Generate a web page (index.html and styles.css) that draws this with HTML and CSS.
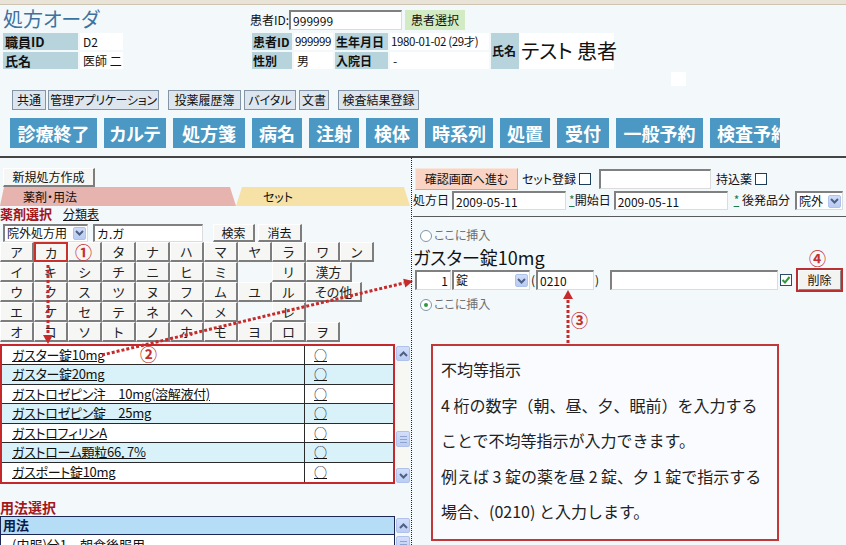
FILE: index.html
```html
<!DOCTYPE html>
<html lang="ja">
<head>
<meta charset="utf-8">
<title>処方オーダ</title>
<link rel="stylesheet" href="styles.css">
</head>
<body>
<div class="topbar"></div>
<div class="head">
  <div class="staff">
    <div class="title">処方オーダ</div>
    <div class="kv"><span class="lbl sl">職員ID</span><span class="val sv">D2</span></div>
    <div class="kv"><span class="lbl sl">氏名</span><span class="val sv">医師 二</span></div>
  </div>
  <div class="patient">
    <div class="pid"><span>患者ID:</span><input class="inp pid-in" value="999999"><span class="btn-green">患者選択</span></div>
    <div class="pinfo">
      <div class="pgrid">
        <span class="lbl">患者ID</span><span class="val num-v">999999</span><span class="lbl">生年月日</span><span class="val num-v">1980-01-02 (29才)</span>
        <span class="lbl">性別</span><span class="val">男</span><span class="lbl">入院日</span><span class="val">-</span>
      </div>
      <span class="lbl tall">氏名</span><span class="val big">テスト 患者</span>
    </div>
  </div>
  <div class="sq"></div>
</div>
<nav class="menu1">
  <span class="m1">共通</span><span class="m1">管理アプリケーション</span><span class="m1">投薬履歴簿</span><span class="m1">バイタル</span><span class="m1">文書</span><span class="m1">検査結果登録</span>
</nav>
<nav class="menu2">
  <span class="m2">診療終了</span><span class="m2">カルテ</span><span class="m2">処方箋</span><span class="m2">病名</span><span class="m2">注射</span><span class="m2">検体</span><span class="m2">時系列</span><span class="m2">処置</span><span class="m2">受付</span><span class="m2">一般予約</span><span class="m2">検査予約</span>
</nav>
<div class="rule"></div>
<div class="main">
  <section class="left">
    <div class="newbtn rb">新規処方作成</div>
    <div class="tabs"><div class="tab tab1">薬剤・用法</div><div class="tab tab2">セット</div></div>
    <div class="selhead"><span class="sect">薬剤選択</span><span class="link">分類表</span></div>
    <div class="search">
      <div class="sel sel-a"><span>院外処方用</span><span class="dd"><svg width="9" height="6" viewBox="0 0 9 6"><path d="M1 1 L4.5 4.5 L8 1" stroke="#4d6185" stroke-width="2" fill="none"/></svg></span></div>
      <input class="inp q" value="カ.ガ">
      <div class="rb sbtn b1">検索</div>
      <div class="rb sbtn b2">消去</div>
    </div>
    <div class="kana">
      <div class="krow"><span class="k rb">ア</span><span class="k rb ksel">カ</span><span class="k rb"></span><span class="k rb">タ</span><span class="k rb">ナ</span><span class="k rb">ハ</span><span class="k rb">マ</span><span class="k rb">ヤ</span><span class="k rb">ラ</span><span class="k rb">ワ</span><span class="k rb">ン</span></div>
      <div class="krow"><span class="k rb">イ</span><span class="k rb">キ</span><span class="k rb">シ</span><span class="k rb">チ</span><span class="k rb">ニ</span><span class="k rb">ヒ</span><span class="k rb">ミ</span><span class="k ke"></span><span class="k rb">リ</span><span class="k rb kw1">漢方</span></div>
      <div class="krow"><span class="k rb">ウ</span><span class="k rb">ク</span><span class="k rb">ス</span><span class="k rb">ツ</span><span class="k rb">ヌ</span><span class="k rb">フ</span><span class="k rb">ム</span><span class="k rb">ユ</span><span class="k rb">ル</span><span class="k rb kw2">その他</span></div>
      <div class="krow"><span class="k rb">エ</span><span class="k rb">ケ</span><span class="k rb">セ</span><span class="k rb">テ</span><span class="k rb">ネ</span><span class="k rb">ヘ</span><span class="k rb">メ</span><span class="k ke"></span><span class="k rb">レ</span></div>
      <div class="krow"><span class="k rb">オ</span><span class="k rb">コ</span><span class="k rb">ソ</span><span class="k rb">ト</span><span class="k rb">ノ</span><span class="k rb">ホ</span><span class="k rb">モ</span><span class="k rb">ヨ</span><span class="k rb">ロ</span><span class="k rb">ヲ</span></div>
    </div>
    <div class="druglist">
      <div class="dtable">
        <div class="drow"><span class="dname">ガスター錠10mg</span><span class="dmark">○</span></div>
        <div class="drow alt"><span class="dname">ガスター錠20mg</span><span class="dmark">○</span></div>
        <div class="drow"><span class="dname">ガストロゼピン注　10mg(溶解液付)</span><span class="dmark">○</span></div>
        <div class="drow alt"><span class="dname">ガストロゼピン錠　25mg</span><span class="dmark">○</span></div>
        <div class="drow"><span class="dname">ガストロフィリンA</span><span class="dmark">○</span></div>
        <div class="drow alt"><span class="dname">ガストローム顆粒66．7%</span><span class="dmark">○</span></div>
        <div class="drow"><span class="dname">ガスポート錠10mg</span><span class="dmark">○</span></div>
      </div>
      <div class="sbar">
        <span class="sbtn-s"><svg width="9" height="6" viewBox="0 0 9 6"><path d="M1 5 L4.5 1.5 L8 5" stroke="#4d6185" stroke-width="2" fill="none"/></svg></span>
        <span class="thumb"></span>
        <span class="sbtn-s down"><svg width="9" height="6" viewBox="0 0 9 6"><path d="M1 1 L4.5 4.5 L8 1" stroke="#4d6185" stroke-width="2" fill="none"/></svg></span>
      </div>
    </div>
    <div class="sect sect2">用法選択</div>
    <div class="uselist">
      <div class="utable"><div class="uhead">用法</div><div class="urow">(内服)分1　朝食後服用</div></div>
      <div class="sbar sbar2">
        <span class="sbtn-s"><svg width="9" height="6" viewBox="0 0 9 6"><path d="M1 5 L4.5 1.5 L8 5" stroke="#4d6185" stroke-width="2" fill="none"/></svg></span>
        <span class="thumb thumb2"></span>
      </div>
    </div>
  </section>
  <section class="right">
    <div class="r1">
      <span class="pinkbtn">確認画面へ進む</span>
      <span class="t-set">セット登録</span><span class="chk"></span>
      <input class="inp setname" value="">
      <span class="t-mochi">持込薬</span><span class="chk"></span>
    </div>
    <div class="r2">
      <span>処方日</span>
      <input class="inp date" value="2009-05-11">
      <span class="t-start"><span class="ast">*</span>開始日</span>
      <input class="inp date" value="2009-05-11">
      <span class="t-gen"><span class="ast">*</span> 後発品分</span>
      <div class="sel sel-b"><span>院外</span><span class="dd"><svg width="9" height="6" viewBox="0 0 9 6"><path d="M1 1 L4.5 4.5 L8 1" stroke="#4d6185" stroke-width="2" fill="none"/></svg></span></div>
    </div>
    <div class="rrule"></div>
    <div class="ins"><span class="radio"></span>ここに挿入</div>
    <div class="drugname">ガスター錠10mg</div>
    <div class="r3">
      <input class="inp qty" value="1">
      <div class="sel sel-c"><span>錠</span><span class="dd"><svg width="9" height="6" viewBox="0 0 9 6"><path d="M1 1 L4.5 4.5 L8 1" stroke="#4d6185" stroke-width="2" fill="none"/></svg></span></div>
      <span class="paren">(</span><input class="inp code" value="0210"><span class="paren">)</span>
      <input class="inp memo" value="">
      <span class="chk on"><svg width="10" height="10" viewBox="0 0 10 10"><path d="M1.5 5 L4 7.5 L8.5 2" stroke="#2f9a3c" stroke-width="2" fill="none"/></svg></span>
      <span class="delbtn"><span class="delin">削除</span></span>
    </div>
    <div class="ins ins2"><span class="radio on"></span>ここに挿入</div>
    <div class="infobox">
      <p>不均等指示</p>
      <p>4 桁の数字（朝、昼、夕、眠前）を入力する</p>
      <p>ことで不均等指示が入力できます。</p>
      <p>例えば 3 錠の薬を昼 2 錠、夕 1 錠で指示する</p>
      <p>場合、(0210) と入力します。</p>
    </div>
  </section>
</div>
<svg class="overlay" width="846" height="545" viewBox="0 0 846 545">
  <g stroke="#c62a2a" stroke-width="3" stroke-dasharray="3 2" fill="none">
    <line x1="48" y1="265" x2="48" y2="336"/>
    <line x1="102" y1="355" x2="404" y2="283"/>
    <line x1="568" y1="343" x2="568" y2="298"/>
  </g>
  <g fill="#c62a2a">
    <polygon points="43,335 53,335 48,344"/>
    <polygon points="413,281 405.3,287.5 403.2,278.7"/>
    <polygon points="568,290 563,299 573,299"/>
  </g>
</svg>
<span class="num n1">①</span>
<span class="num n2">②</span>
<span class="num n3">③</span>
<span class="num n4">④</span>
</body>
</html>
```

FILE: styles.css
```css
* { box-sizing: border-box; margin: 0; padding: 0; }
html, body { margin: 0; padding: 0; }
body {
  width: 846px; height: 545px; overflow: hidden; position: relative;
  background: #f3f8fb;
  font-family: "Noto Sans CJK JP", "Noto Sans", sans-serif;
  font-size: 12px; line-height: 1.2; color: #111;
  font-feature-settings: "palt" 1;
}
input { font-family: inherit; }

.topbar { height: 5px; background: #e9e3d7; border-bottom: 1px solid #cdc3b1; }

/* header */
.head { display: flex; height: 85px; padding-left: 3px; }
.staff { width: 247px; flex: none; }
.title { height: 28px; line-height: 28px; font-size: 20px; color: #3d72a0; }
.kv { display: flex; gap: 2px; height: 17px; margin-bottom: 2px; }
.lbl { background: #b7d3dc; font-weight: 700; font-size: 13px; line-height: 17px; padding-left: 2px; color: #111; white-space: nowrap; overflow: hidden; }
.val { background: #fff; line-height: 17px; padding-left: 3px; font-size: 12px; white-space: nowrap; }
.sl { width: 75px; }
.sv { width: 43px; }
.patient { width: 365px; flex: none; }
.pid { display: flex; align-items: center; height: 20px; margin-top: 5px; }
.inp {
  display: block; height: 20px; background: #fff; color: #111;
  border-style: solid; border-width: 2px 1px 1px 2px;
  border-color: #808080 #dcdcdc #dcdcdc #808080;
  font-size: 12px; line-height: 17px; padding: 0 2px; outline: none;
}
.pid-in { width: 113px; }
.btn-green { margin-left: 3px; width: 60px; height: 20px; line-height: 20px; text-align: center; background: #d3ebc3; }
.pinfo { display: flex; margin-top: 3px; margin-left: 2px; }
.pgrid { display: grid; grid-template-columns: 40px 39px 53px 99px; column-gap: 2px; row-gap: 2px; grid-auto-rows: 17px; }
.pgrid .lbl { font-size: 12px; padding-left: 1px; }
.num-v { font-size: 11.5px; letter-spacing: -0.4px; padding-left: 1px; overflow: hidden; }
.tall { margin-left: 2px; width: 28px; height: 36px; line-height: 36px; padding-left: 1px; font-size: 12px; }
.big { width: 95px; height: 36px; line-height: 36px; font-size: 20px; padding-left: 2px; }
.sq { flex: none; width: 15px; height: 14px; background: #fff; margin-left: 56px; margin-top: 67px; }

/* menus */
.menu1 { display: flex; height: 20px; }
.m1 { flex: none; height: 20px; line-height: 18px; border: 1px solid #8595a8; background: #dde6ee; font-size: 12px; text-align: center; white-space: nowrap; }
.m1:nth-child(1) { margin-left: 12px; width: 34px; }
.m1:nth-child(2) { margin-left: 2px; width: 111px; letter-spacing: -0.3px; }
.m1:nth-child(3) { margin-left: 9px; width: 73px; }
.m1:nth-child(4) { margin-left: 3px; width: 52px; }
.m1:nth-child(5) { margin-left: 3px; width: 30px; }
.m1:nth-child(6) { margin-left: 9px; width: 81px; }

.menu2 { display: flex; gap: 7px; height: 30px; margin-top: 8px; margin-left: 10px; width: 770px; overflow: hidden; }
.m2 { flex: none; height: 30px; line-height: 30px; background: #4a98c3; color: #fff; font-size: 18px; font-weight: 700; text-align: center; white-space: nowrap; }
.m2:nth-child(1) { width: 87px; }
.m2:nth-child(2) { width: 62px; }
.m2:nth-child(3) { width: 72px; }
.m2:nth-child(4) { width: 50px; }
.m2:nth-child(5) { width: 50px; }
.m2:nth-child(6) { width: 52px; }
.m2:nth-child(7) { width: 68px; }
.m2:nth-child(8) { width: 50px; }
.m2:nth-child(9) { width: 52px; }
.m2:nth-child(10) { width: 87px; }
.m2:nth-child(11) { width: 86px; }

.rule { margin-top: 8px; height: 2px; background: #444; }

/* main */
.main { display: flex; height: 387px; overflow: hidden; }
.left { width: 412px; flex: none; border-right: 1px dotted #222; }
.right { flex: 1; padding-left: 1px; }

.rb {
  background: #f6f6f4;
  border-style: solid; border-width: 1px 2px 2px 1px;
  border-color: #fff #7d7d7d #7d7d7d #fff;
  text-align: center;
}
.newbtn { margin-top: 10px; margin-left: 3px; width: 92px; height: 19px; line-height: 16px; font-size: 12px; }

.tabs { display: flex; height: 19px; }
.tab { height: 19px; line-height: 19px; font-size: 12px; }
.tab1 { width: 236px; background: #e6b3ae; padding-left: 23px; clip-path: polygon(4px 0, 230px 0, 236px 100%, 0 100%); }
.tab2 { width: 174px; background: #f6e2a6; padding-left: 27px; clip-path: polygon(6px 0, 168px 0, 174px 100%, 0 100%); }

.selhead { height: 16px; line-height: 16px; display: flex; align-items: center; }
.sect { color: #a3161b; font-weight: 700; font-size: 13px; }
.link { margin-left: 11px; text-decoration: underline; font-size: 12px; }

.search { display: flex; align-items: center; height: 19px; margin-top: 1px; }
.sel {
  display: flex; align-items: center; height: 18px; background: #fff;
  border-style: solid; border-width: 2px 1px 1px 2px;
  border-color: #808080 #dcdcdc #dcdcdc #808080;
  padding-left: 2px; font-size: 12px; white-space: nowrap;
}
.dd {
  margin-left: auto; margin-right: 1px; width: 13px; height: 13px;
  background: linear-gradient(#cfdcfa, #b9cbf2); border: 1px solid #aec2ec; border-radius: 2px;
  display: flex; align-items: center; justify-content: center;
}
.sel-a { margin-left: 3px; width: 85px; }
.q { margin-left: 5px; width: 110px; height: 18px; line-height: 15px; }
.sbtn { height: 18px; line-height: 15px; font-size: 12px; }
.b1 { margin-left: 10px; width: 42px; }
.b2 { margin-left: 3px; width: 44px; }

.kana { display: flex; flex-direction: column; }
.krow { display: flex; height: 20px; }
.k { flex: none; width: 34px; height: 20px; line-height: 17px; font-size: 13px; color: #222; }
.ke { background: transparent; }
.kw1 { width: 46px; }
.kw2 { width: 56px; }
.ksel { border: 2px solid #c8302c; }

.druglist { display: flex; margin-top: 2px; height: 140px; }
.dtable { width: 395px; flex: none; border: 2px solid #c4282a; display: grid; grid-template-rows: repeat(7, 1fr); }
.drow { display: grid; grid-template-columns: 303px 1fr; border-bottom: 1px solid #2a2a2a; background: #fff; }
.drow:last-child { border-bottom: none; }
.drow.alt { background: #d9f1f9; }
.dname { border-right: 1px solid #2a2a2a; padding-left: 10px; font-size: 13px; line-height: 18px; letter-spacing: -0.3px; text-decoration: underline; white-space: nowrap; overflow: hidden; }
.dmark { padding-left: 9px; font-size: 13px; line-height: 18px; text-decoration: underline; }

.sbar { width: 14px; margin-left: 1px; margin-top: 2px; height: 137px; background: #f7f7f3; display: flex; flex-direction: column; }
.sbtn-s {
  width: 14px; height: 15px; flex: none;
  background: linear-gradient(#d3defa, #bccdf3); border: 1px solid #aec2ec; border-radius: 2px;
  display: flex; align-items: center; justify-content: center;
}
.sbtn-s.down { margin-top: auto; }
.thumb {
  width: 14px; height: 16px; flex: none; margin-top: 70px;
  border: 1px solid #aec2ec; border-radius: 2px;
  background:
    linear-gradient(#8ea4d0, #8ea4d0) 3px 4px / 7px 1px no-repeat,
    linear-gradient(#8ea4d0, #8ea4d0) 3px 7px / 7px 1px no-repeat,
    linear-gradient(#8ea4d0, #8ea4d0) 3px 10px / 7px 1px no-repeat,
    linear-gradient(#d3defa, #bccdf3);
}

.sect2 { display: block; margin-top: 15px; height: 16px; line-height: 16px; font-size: 14px; }
.uselist { display: flex; margin-top: 1px; }
.utable { width: 395px; flex: none; border: 1px solid #1b2654; border-bottom: none; }
.uhead { height: 17px; line-height: 16px; background: #b5ddf5; font-weight: 700; font-size: 13px; color: #0b1b4b; padding-left: 2px; }
.urow { height: 20px; border-top: 1px solid #1b2654; background: #fff; padding-left: 11px; font-size: 13px; line-height: 19px; }
.sbar2 { height: 40px; margin-top: 2px; }
.thumb2 { margin-top: 3px; }

/* right panel */
.r1 { display: flex; align-items: center; height: 22px; margin-top: 10px; }
.pinkbtn {
  margin-left: 2px; width: 103px; height: 22px; line-height: 20px; text-align: center;
  background: #f9d4c4; border-style: solid; border-width: 1px; border-color: #fbe6dc #c9a898 #c9a898 #fbe6dc;
}
.t-set { margin-left: 4px; }
.chk { flex: none; width: 12px; height: 12px; margin-left: 3px; background: #fff; border: 1px solid #1d3d5d; display: inline-flex; align-items: center; justify-content: center; }
.chk.on { border-color: #2b4b6b; }
.setname { margin-left: 8px; width: 112px; }
.t-mochi { margin-left: 5px; }

.r2 { display: flex; align-items: center; height: 19px; margin-top: 1px; white-space: nowrap; }
.date { margin-left: 3px; width: 114px; height: 19px; line-height: 16px; }
.t-start { margin-left: 3px; }
.t-gen { margin-left: 6px; }
.ast { color: #1f7a50; text-decoration: underline; }
.sel-b { margin-left: 5px; width: 48px; height: 19px; }

.rrule { margin-top: 6px; height: 1px; background: #5a5a5a; }

.ins { display: flex; align-items: center; height: 15px; margin-top: 11px; margin-left: 7px; color: #6e6e6e; font-size: 12px; }
.radio { width: 12px; height: 12px; border: 1px solid #7f96ae; border-radius: 50%; background: #fff; margin-right: 2px; display: inline-flex; align-items: center; justify-content: center; }
.radio.on::after { content: ""; width: 4px; height: 4px; border-radius: 50%; background: #2f9a3c; }
.ins2 { margin-top: 6px; }

.drugname { margin-top: 4px; height: 20px; line-height: 20px; font-size: 18px; color: #111; }

.r3 { display: flex; align-items: center; height: 22px; margin-top: 2px; }
.qty { margin-left: 2px; width: 36px; text-align: right; }
.sel-c { margin-left: 1px; width: 78px; height: 20px; }
.paren { width: 6px; text-align: center; font-size: 12px; }
.code { width: 58px; }
.memo { margin-left: 10px; width: 168px; }
.r3 .chk { margin-left: 2px; }
.delbtn { margin-left: 4px; width: 47px; height: 24px; border: 2px solid #b83030; display: flex; }
.delin { flex: 1; background: #f3f3f1; border-style: solid; border-width: 1px; border-color: #fff #888 #888 #fff; text-align: center; line-height: 18px; font-size: 12px; }

.infobox {
  margin-top: 32px; margin-left: 18px; width: 348px; height: 197px;
  border: 2px solid #c03838; background: #f9fbfe;
  padding: 6px 0 0 8px; font-feature-settings: normal;
}
.infobox p { font-size: 16px; line-height: 35.5px; color: #222; white-space: nowrap; }

/* overlays */
.overlay { position: absolute; left: 0; top: 0; pointer-events: none; }
.num { position: absolute; font-size: 17px; line-height: 17px; font-weight: 700; color: #c33030; font-feature-settings: normal; }
.n1 { left: 75px; top: 243px; }
.n2 { left: 140px; top: 345px; }
.n3 { left: 571px; top: 311px; }
.n4 { left: 809px; top: 249px; }
```
